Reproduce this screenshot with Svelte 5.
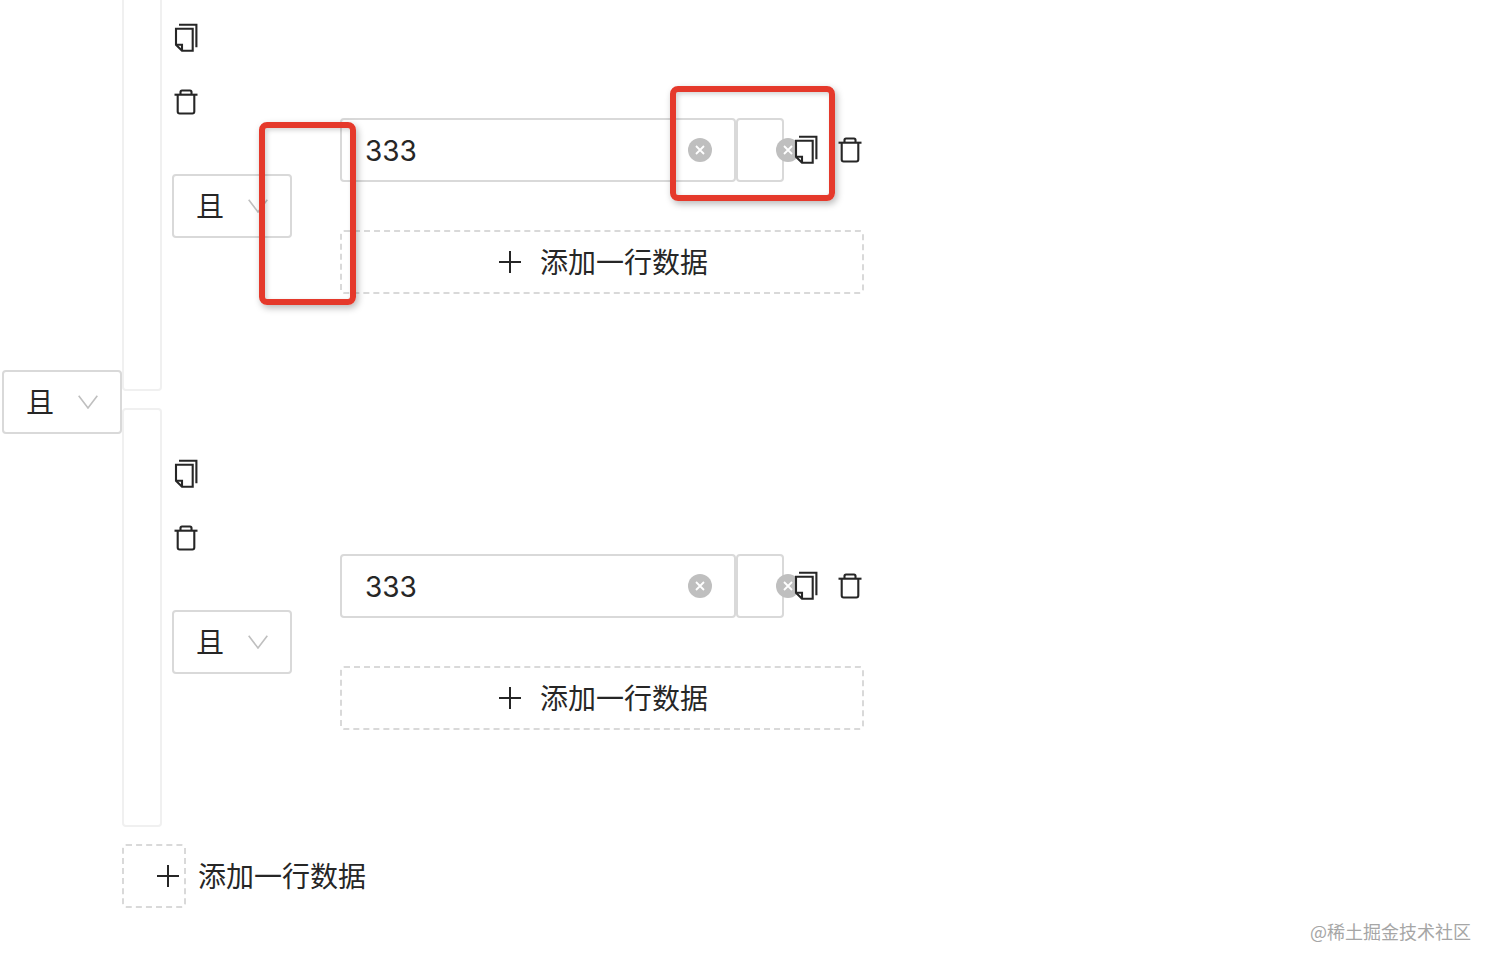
<script lang="ts">
	const groups = [{ id: 1 }, { id: 2 }];
</script>

{#snippet chevron()}
	<svg class="chevron" width="20" height="14" viewBox="0 0 20 14" fill="none">
		<path d="M0.7 0.7 10 13 19.3 0.7" />
	</svg>
{/snippet}

{#snippet select()}
	<div class="select">
		<span>且</span>
		{@render chevron()}
	</div>
{/snippet}

{#snippet copyIcon()}
	<svg class="icon" width="24" height="30" viewBox="0 -1 24 30" fill="none">
		<path d="M5 0.7H22.4V23.3" />
		<path d="M2 4.7H18.7V26.7H8L2 20.7Z" fill="#fff" />
		<path d="M2.5 20.7H8V26.7" stroke-width="1.5" />
	</svg>
{/snippet}

{#snippet trashIcon()}
	<svg class="icon" width="24" height="30" viewBox="0 -1 24 30" fill="none">
		<path d="M0.5 6.7H23.5" />
		<path d="M6.5 6.7V4Q6.5 2.5 8 2.5H16Q17.5 2.5 17.5 4V6.7" />
		<path d="M3.7 6.7V23.5Q3.7 25.5 5.7 25.5H18.3Q20.3 25.5 20.3 23.5V6.7" />
	</svg>
{/snippet}

{#snippet plus()}
	<svg class="plus" width="22" height="22" viewBox="0 0 22 22" fill="none">
		<path d="M0 11H22M11 0V22" />
	</svg>
{/snippet}

{#snippet clear()}
	<svg class="clear" width="24" height="24" viewBox="0 0 24 24">
		<circle cx="12" cy="12" r="12" fill="#bfbfbf" />
		<path d="M8 8 16 16M16 8 8 16" stroke="#fff" stroke-width="1.8" />
	</svg>
{/snippet}

<div class="page">
	<div class="tree">
		<div class="relation">
			<div class="root-select">{@render select()}</div>
			<div class="groups">
				{#each groups as group (group.id)}
					<div class="group">
						<div class="group-body">
							<div class="actions">
								<div class="action">{@render copyIcon()}</div>
								<div class="action">{@render trashIcon()}</div>
							</div>
							<div class="rule">
								{@render select()}
								<div class="rule-main">
									<div class="fields">
										<div class="field wide">
											<span class="value">333</span>
											{@render clear()}
										</div>
										<div class="field narrow">{@render clear()}</div>
										<div class="row-actions">
											{@render copyIcon()}
											{@render trashIcon()}
										</div>
									</div>
									<div class="add wide-add">
										{@render plus()}
										<span>添加一行数据</span>
									</div>
								</div>
							</div>
						</div>
					</div>
				{/each}
			</div>
		</div>
		<div class="add small-add">
			{@render plus()}
			<span>添加一行数据</span>
		</div>
	</div>

	<div class="mark mark-a"></div>
	<div class="mark mark-b"></div>
	<div class="watermark">@稀土掘金技术社区</div>
</div>

<style>
	:global(body) {
		background: #fff;
	}
	.page {
		position: relative;
		width: 1496px;
		height: 968px;
		overflow: hidden;
		font-family: 'Noto Sans CJK SC', 'Noto Sans', sans-serif;
		font-size: 28px;
		color: #262626;
		background: #fff;
	}
	.tree {
		margin-top: -28px;
		padding-left: 2px;
	}
	.relation {
		display: flex;
		align-items: center;
	}
	.root-select {
		margin-top: 5px;
		flex: none;
	}
	.select {
		box-sizing: border-box;
		display: flex;
		align-items: center;
		gap: 24px;
		width: 120px;
		height: 64px;
		padding-left: 22px;
		border: 2px solid #d9d9d9;
		border-radius: 4px;
		flex: none;
		line-height: 1;
	}
	.select span,
	.add span {
		margin-top: -2px;
	}
	.chevron path {
		stroke: #bfbfbf;
		stroke-width: 1.6;
	}
	.groups {
		display: flex;
		flex-direction: column;
		gap: 17px;
	}
	.group {
		box-sizing: border-box;
		width: 40px;
		height: 419px;
		border: 2px solid #f0f0f0;
		border-radius: 4px;
	}
	.group-body {
		width: 800px;
		margin-left: 48px;
		padding-top: 32px;
	}
	.action {
		display: flex;
		align-items: center;
		height: 64px;
		padding-left: 2px;
	}
	.icon {
		display: block;
		flex: none;
	}
	.icon path {
		stroke: #262626;
		stroke-width: 2.1;
	}
	.rule {
		display: flex;
		align-items: center;
		gap: 48px;
		margin-top: -16px;
	}
	.rule-main {
		display: flex;
		flex-direction: column;
		gap: 48px;
	}
	.fields {
		display: flex;
		align-items: center;
	}
	.field {
		box-sizing: border-box;
		position: relative;
		height: 64px;
		border: 2px solid #d9d9d9;
		border-radius: 4px;
		display: flex;
		align-items: center;
	}
	.wide {
		width: 396px;
		padding-left: 23px;
	}
	.narrow {
		width: 48px;
	}
	.value {
		font-family: Inter, 'Noto Sans', sans-serif;
		line-height: 1;
		margin-top: 2px;
	}
	.clear {
		position: absolute;
		top: 18px;
	}
	.wide .clear {
		right: 22px;
	}
	.narrow .clear {
		right: -18px;
	}
	.row-actions {
		position: relative;
		z-index: 1;
		display: flex;
		gap: 20px;
		margin-left: 10px;
	}
	.add {
		box-sizing: border-box;
		display: flex;
		align-items: center;
		gap: 20px;
		height: 64px;
		border: 2px dashed #d9d9d9;
		border-radius: 4px;
		white-space: nowrap;
		line-height: 1;
	}
	.plus {
		flex: none;
	}
	.plus path {
		stroke: #262626;
		stroke-width: 2;
	}
	.wide-add {
		width: 524px;
		justify-content: center;
		padding-left: 3px;
		gap: 19px;
	}
	.small-add {
		width: 64px;
		margin: 17px 0 0 120px;
		padding-left: 33px;
		gap: 19px;
	}
	.mark {
		position: absolute;
		box-sizing: border-box;
		border: 6px solid #e5392b;
		border-radius: 8px;
		box-shadow: 2px 3px 7px rgba(0, 0, 0, 0.28), inset 2px 2px 5px rgba(0, 0, 0, 0.18);
	}
	.mark-a {
		left: 259px;
		top: 122px;
		width: 97px;
		height: 183px;
	}
	.mark-b {
		left: 670px;
		top: 86px;
		width: 165px;
		height: 115px;
	}
	.watermark {
		position: absolute;
		right: 25px;
		top: 918px;
		font-size: 18px;
		line-height: 26px;
		color: #a6a6a6;
	}
</style>
